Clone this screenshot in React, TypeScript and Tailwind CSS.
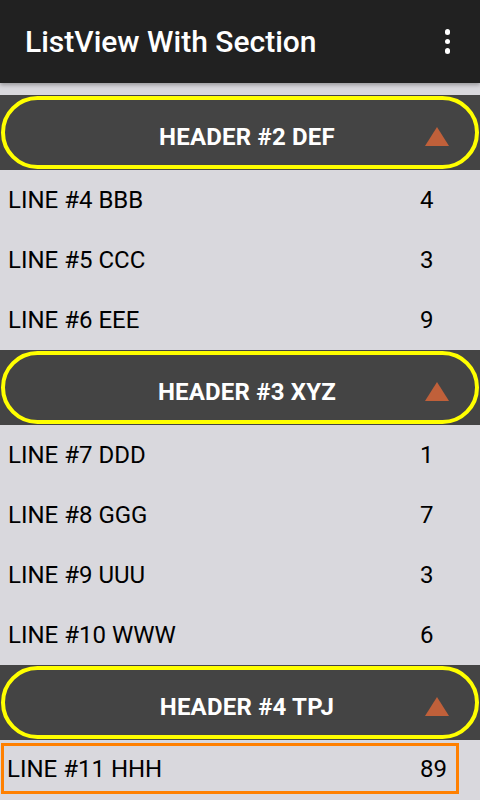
import React from "react";

type Section = {
  title: string;
  lines: { label: string; value: string }[];
};

const sections: Section[] = [
  {
    title: "HEADER #2 DEF",
    lines: [
      { label: "LINE #4 BBB", value: "4" },
      { label: "LINE #5 CCC", value: "3" },
      { label: "LINE #6 EEE", value: "9" },
    ],
  },
  {
    title: "HEADER #3 XYZ",
    lines: [
      { label: "LINE #7 DDD", value: "1" },
      { label: "LINE #8 GGG", value: "7" },
      { label: "LINE #9 UUU", value: "3" },
      { label: "LINE #10 WWW", value: "6" },
    ],
  },
];

const SectionHeader = ({ title }: { title: string }) => (
  <div className="h-[75px] bg-[#444444] px-[1px] py-[1px]">
    <div className="relative flex h-full items-center justify-center rounded-full border-[4px] border-[#ffff00] pl-[14px] pt-[8px]">
      <span className="text-[24px] font-bold text-white tracking-[0.2px]">{title}</span>
      <svg
        className="absolute right-[26px] top-[27px]"
        width="24"
        height="19"
        viewBox="0 0 24 19"
      >
        <polygon points="12,0 24,19 0,19" fill="#c0603a" />
      </svg>
    </div>
  </div>
);

const Row = ({ label, value }: { label: string; value: string }) => (
  <div className="flex h-[60px] items-center text-[24px] text-black">
    <span className="w-[420px] pl-[8px]">{label}</span>
    <span>{value}</span>
  </div>
);

export default function App() {
  return (
    <div
      className="h-[800px] w-[480px] overflow-hidden bg-[#d9d8dd]"
      style={{ fontFamily: "Roboto, 'Noto Sans', sans-serif" }}
    >
      {/* Action bar */}
      <div className="relative z-10 flex h-[83px] items-center justify-between bg-[#212121] pl-[25px] pr-[30px] shadow-[0_2px_4px_rgba(0,0,0,0.3)]">
        <h1 className="text-[30px] font-medium text-white">ListView With Section</h1>
        <div className="flex flex-col items-center gap-[4px]">
          <span className="block h-[5.5px] w-[5.5px] rounded-full bg-white"></span>
          <span className="block h-[5.5px] w-[5.5px] rounded-full bg-white"></span>
          <span className="block h-[5.5px] w-[5.5px] rounded-full bg-white"></span>
        </div>
      </div>

      <div className="pt-[12px]">
        {sections.map((s) => (
          <div key={s.title}>
            <SectionHeader title={s.title} />
            {s.lines.map((l) => (
              <Row key={l.label} label={l.label} value={l.value} />
            ))}
          </div>
        ))}
        <SectionHeader title="HEADER #4 TPJ" />
        <div className="mt-[3px] ml-[1px] flex h-[51px] w-[458px] items-center border-[3px] border-[#ff8000] text-[24px] text-black">
          <span className="w-[416px] pl-[3px]">LINE #11 HHH</span>
          <span>89</span>
        </div>
      </div>
    </div>
  );
}
